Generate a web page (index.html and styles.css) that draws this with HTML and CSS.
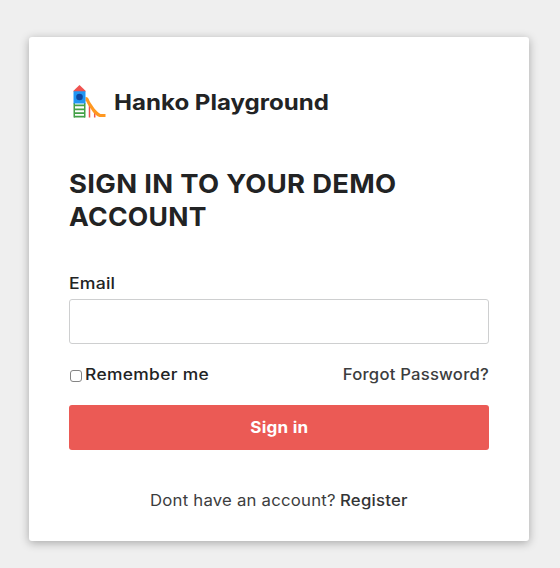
FILE: index.html
```html
<!DOCTYPE html>
<html lang="en">
<head>
<meta charset="utf-8">
<title>Hanko Playground</title>
<link rel="stylesheet" href="styles.css">
</head>
<body>
<main class="card">
  <header class="brand">
    <svg class="logo" viewBox="0 0 38 38" aria-hidden="true">
      <path fill="none" stroke="#ef5350" stroke-width="1.5" d="M20.500 22v12.500M25.700 27v7.500"/>
      <path fill="#ff9820" d="M16.500 14c2.500 0 3 1.500 4 4 3 5 7 11 11 13h5v3h-6c-5-1-9-9-12-13-1-2-1-3-2-3z"/>
      <path fill="#43a047" d="M5 21.500h11v1.800H5zM5 25.500h11v1.800H5zM5 29.200h11V31H5zM5 32.800h11v1.700H5z"/>
      <path fill="#43a047" d="M4.500 20H6v14.500H4.500zM15 20h1.500v14.500H15z"/>
      <path fill="#2196f3" d="M4.500 8h12v12.500h-12z"/>
      <circle cx="10.500" cy="14" r="3.300" fill="#0d47a1"/>
      <path fill="#ef5350" d="M4 8.300 10.500 2l6.500 6.300z"/>
    </svg>
    <span class="name">Hanko Playground</span>
  </header>
  <h1><span class="line">Sign in to your demo</span><span class="line line-short">account</span></h1>
  <form>
    <label class="label" for="email">Email</label>
    <input class="field" id="email" type="email">
    <div class="options">
      <label class="remember"><input class="check" type="checkbox"><span class="remember-text">Remember me</span></label>
      <a class="forgot">Forgot Password?</a>
    </div>
    <button class="submit" type="button"><span class="submit-text">Sign in</span></button>
  </form>
  <p class="signup"><span class="ask">Dont have an account?</span><a class="register">Register</a></p>
</main>
</body>
</html>
```
FILE: styles.css
```css
* { box-sizing: border-box; }
body {
  margin: 0;
  min-height: 568px;
  padding: 37px 0 0 29px;
  background: #efefef;
  color: #222324;
  font: 500 15.5px/20px Inter, sans-serif;
}
.card {
  width: 500px;
  height: 504px;
  padding: 44px 40px 0;
  background: #fff;
  border-radius: 3px;
  box-shadow: 0 2px 10px rgba(0, 0, 0, .3);
}
.brand { display: flex; align-items: center; height: 42px; }
.logo { width: 38px; height: 38px; margin-right: 7px; }
.name {
  font-size: 21.5px;
  line-height: 30px;
  font-weight: 700;
  white-space: nowrap;
  transform: scaleX(1.12);
  transform-origin: left;
}
h1 {
  margin: 44px 0 0;
  font-size: 25.5px;
  line-height: 33px;
  font-weight: 700;
  letter-spacing: .3px;
  text-transform: uppercase;
  white-space: nowrap;
}
.line { display: block; transform: scaleX(1.074); transform-origin: left; }
.line-short { transform: scaleX(1.04); }
form { margin-top: 41px; }
.label { display: block; width: 60px; letter-spacing: .15px; transform: scaleX(1.14); transform-origin: left; }
.field {
  display: block;
  width: 100%;
  height: 45px;
  margin-top: 5px;
  border: 1px solid #cecfd0;
  border-radius: 3px;
  background: #fff;
}
.options { display: flex; justify-content: space-between; height: 20px; margin-top: 21px; white-space: nowrap; }
.remember { display: flex; letter-spacing: .3px; }
.remember-text { transform: scaleX(1.123); transform-origin: left; }
.check {
  appearance: none;
  width: 12px;
  height: 12px;
  margin: 5px 3px 0 1px;
  border: 1px solid #858585;
  border-radius: 3px;
}
.forgot { color: #3c3d3e; letter-spacing: .2px; transform: scaleX(1.075); transform-origin: right; }
.submit {
  display: block;
  width: 100%;
  height: 45px;
  margin-top: 20px;
  border: 0;
  border-radius: 3px;
  background: #eb5a55;
  color: #fff;
  font: 700 15.5px/20px Inter, sans-serif;
  letter-spacing: .2px;
}
.submit-text { display: inline-block; transform: scaleX(1.1); }
.signup { display: flex; justify-content: center; margin: 41px 0 0; white-space: nowrap; color: #3c3d3e; letter-spacing: .2px; }
.ask { font-weight: 400; margin-right: 18px; transform: scaleX(1.08); transform-origin: left; }
.register { margin-right: 5px; color: #333435; transform: scaleX(1.08); transform-origin: left; }
```
